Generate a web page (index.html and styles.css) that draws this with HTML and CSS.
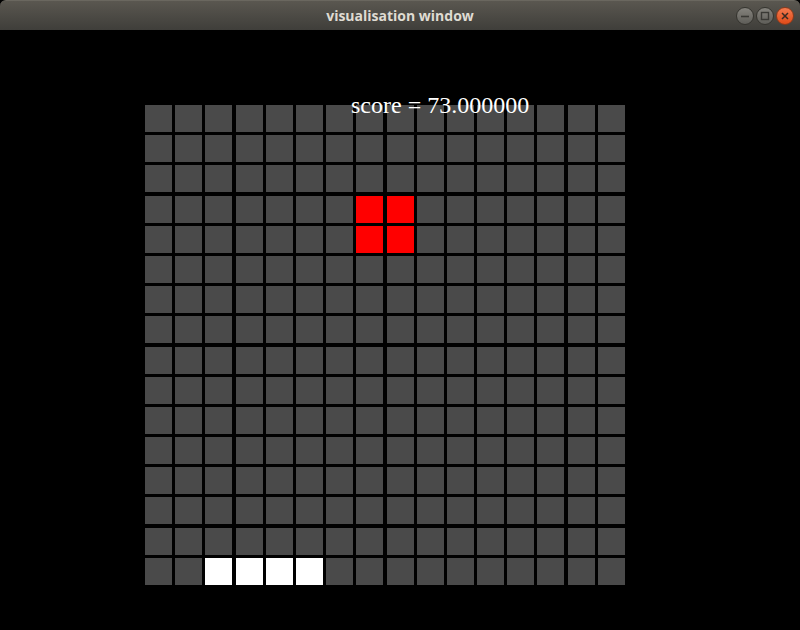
FILE: index.html
```html
<!DOCTYPE html>
<html>
<head>
<meta charset="utf-8">
<link rel="stylesheet" href="styles.css">
</head>
<body>
<div class="window">
  <header class="titlebar">
    <span class="title">visualisation window</span>
    <div class="controls">
      <span class="btn btn-min"><svg width="10" height="10" viewBox="0 0 10 10"><path d="M1 5.5h8" stroke="#3a3935" stroke-width="1.6"/></svg></span>
      <span class="btn btn-max"><svg width="10" height="10" viewBox="0 0 10 10"><rect x="1.5" y="1.5" width="7" height="7" fill="none" stroke="#3a3935" stroke-width="1.4"/></svg></span>
      <span class="btn btn-close"><svg width="10" height="10" viewBox="0 0 10 10"><path d="M2 2l6 6M8 2l-6 6" stroke="#3a2a22" stroke-width="1.5"/></svg></span>
    </div>
  </header>
  <main class="canvas">
    <div class="board">
      <div class="grid" id="grid"></div>
      <div class="score">score = 73.000000</div>
    </div>
  </main>
</div>
<script src="app.js"></script>
</body>
</html>
```
FILE: styles.css
```css
* { box-sizing: border-box; }
html, body { margin: 0; padding: 0; background: #000; }
.window {
  width: 800px;
  height: 630px;
  background: #000;
  display: flex;
  flex-direction: column;
}
.titlebar {
  height: 30px;
  flex: none;
  position: relative;
  display: flex;
  align-items: center;
  justify-content: center;
  background: linear-gradient(#5a5750, #3f3e3a);
  border-top: 1px solid #6a675f;
  border-radius: 6px 6px 0 0;
}
.title {
  font-family: "Open Sans", "DejaVu Sans", sans-serif;
  font-weight: 700;
  font-size: 14px;
  color: #dfdbd2;
}
.controls {
  position: absolute;
  right: 6px;
  top: 6px;
  display: flex;
  gap: 2px;
}
.btn {
  width: 18px;
  height: 18px;
  border-radius: 50%;
  display: flex;
  align-items: center;
  justify-content: center;
  border: 1px solid #35342f;
}
.btn-min, .btn-max {
  background: linear-gradient(#85837d, #5e5d58);
}
.btn-close {
  background: linear-gradient(#f47a4f, #df4b18);
  border-color: #8a3a1c;
}
.canvas {
  flex: 1;
  padding: 75px 0 0 145px;
}
.board {
  position: relative;
  width: 480px;
}
.grid {
  display: grid;
  grid-template-columns: repeat(16, 27px);
  grid-auto-rows: 27px;
  gap: 3.2px;
}
.cell { background: #4a4a4a; }
.cell.red { background: #ff0000; }
.cell.white { background: #ffffff; }
.score {
  position: absolute;
  left: 206px;
  top: -14px;
  font-family: "Liberation Serif", "Times New Roman", serif;
  font-size: 24px;
  line-height: 28px;
  color: #fff;
  white-space: nowrap;
}
```
FILE: app.js
```js
const grid = document.getElementById('grid');
const red = new Set(['3,7','3,8','4,7','4,8']);
const white = new Set(['15,2','15,3','15,4','15,5']);
for (let r = 0; r < 16; r++) {
  for (let c = 0; c < 16; c++) {
    const d = document.createElement('div');
    d.className = 'cell';
    const k = r + ',' + c;
    if (red.has(k)) d.classList.add('red');
    if (white.has(k)) d.classList.add('white');
    grid.appendChild(d);
  }
}
```
